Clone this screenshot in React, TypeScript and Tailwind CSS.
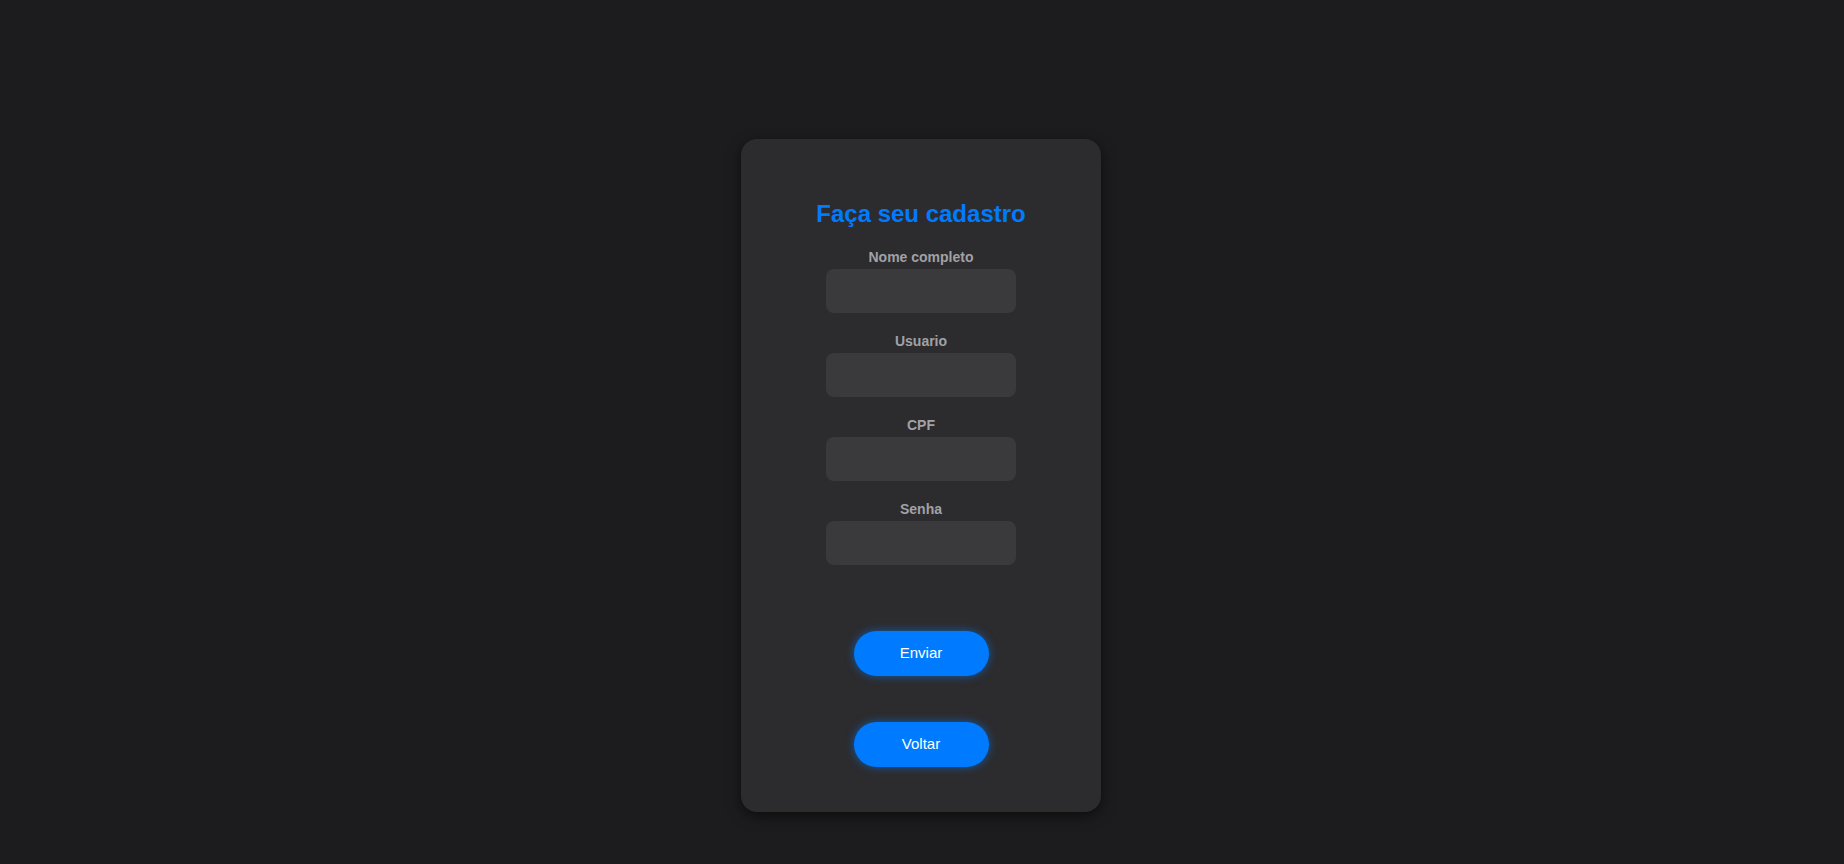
const fields = ['Nome completo', 'Usuario', 'CPF', 'Senha']

export default function App() {
  return (
    <div className="min-h-screen bg-[#1c1c1e] font-['Liberation_Sans',Arial,sans-serif] flex justify-center pt-[139px] pr-[2px]">
      <div className="w-[360px] h-[673px] rounded-2xl bg-[#2c2c2e] shadow-[0_4px_14px_rgba(0,0,0,0.55)] flex flex-col items-center pt-[61px]">
        <h2 className="text-[24px] leading-[28px] font-bold text-[#007bff]">Faça seu cadastro</h2>

        <form className="mt-[21px] flex flex-col items-center">
          {fields.map((f) => (
            <div key={f} className="flex flex-col items-center mb-5">
              <label className="text-[14px] leading-[16px] font-bold text-[#a1a1a6]">{f}</label>
              <input
                type={f === 'Senha' ? 'password' : 'text'}
                className="mt-1 w-[190px] h-[44px] rounded-lg bg-[#3a3a3c] outline-none px-3 text-white"
              />
            </div>
          ))}

          <button
            type="button"
            className="mt-[46px] w-[135px] h-[45px] rounded-full bg-[#007bff] text-white text-[15px] shadow-[0_0_8px_rgba(0,123,255,0.6)]"
          >
            Enviar
          </button>
          <button
            type="button"
            className="mt-[46px] w-[135px] h-[45px] rounded-full bg-[#007bff] text-white text-[15px] shadow-[0_0_8px_rgba(0,123,255,0.6)]"
          >
            Voltar
          </button>
        </form>
      </div>
    </div>
  )
}
